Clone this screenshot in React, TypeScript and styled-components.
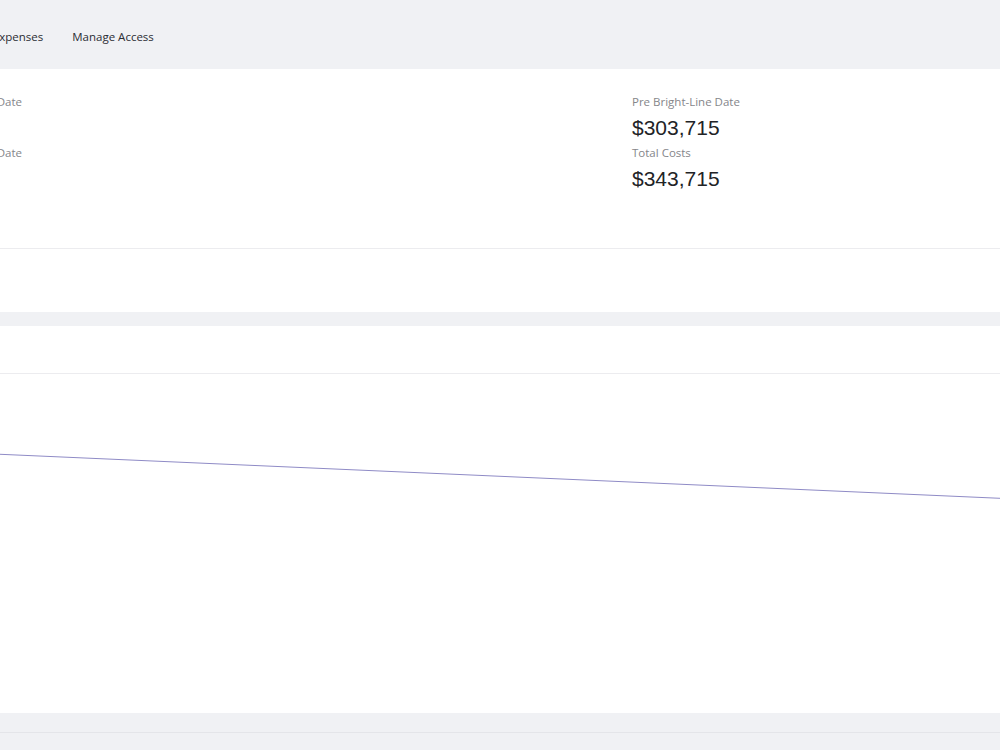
import React from "react";
import styled, { createGlobalStyle } from "styled-components";

const GlobalStyle = createGlobalStyle`
  html, body {
    margin: 0;
    padding: 0;
    background: #f0f1f4;
    font-family: "Open Sans", "Liberation Sans", sans-serif;
  }
`;

// the visible window is a crop of a wider page
const Viewport = styled.div`
  width: 1000px;
  height: 750px;
  overflow: hidden;
  background: #f0f1f4;
`;

const Page = styled.div`
  width: 1120px;
  margin-left: -120px;
  display: flex;
  flex-direction: column;
`;

const NavBar = styled.nav`
  height: 52px;
  display: flex;
  align-items: center;
  gap: 29px;
  padding: 20px 0 0 34px;
  box-sizing: border-box;
`;

const NavItem = styled.span`
  font-size: 11.5px;
  color: #2b2d33;
  white-space: nowrap;
`;

const Card = styled.section<{ $top: number }>`
  margin-top: ${(p) => p.$top}px;
  background: #fff;
  display: flex;
  flex-direction: column;
`;

const StatsGrid = styled.div`
  display: grid;
  grid-template-columns: 142px 610px 1fr;
  padding-top: 24px;
  height: 180px;
  box-sizing: border-box;
  border-bottom: 1px solid #ececef;
`;

const StatColumn = styled.div<{ $right?: boolean }>`
  display: flex;
  flex-direction: column;
  align-items: ${(p) => (p.$right ? "flex-end" : "flex-start")};
`;

const Label = styled.div`
  font-size: 11.5px;
  line-height: 18px;
  color: #85868a;
  height: 51px;
`;

const StatLabel = styled.div`
  font-size: 11.5px;
  line-height: 18px;
  color: #85868a;
`;

const Value = styled.div`
  font-family: "Liberation Sans", Arial, sans-serif;
  font-size: 21px;
  line-height: 33px;
  color: #222326;
`;

const CardFooter = styled.div`
  height: 63px;
`;

const ChartHeader = styled.div`
  height: 47px;
  border-bottom: 1px solid #ececef;
`;

const ChartArea = styled.div`
  height: 339px;
`;

const Footer = styled.div`
  margin-top: 19px;
  border-top: 1px solid #e4e5e9;
  height: 40px;
`;

const App: React.FC = () => {
  return (
    <>
      <GlobalStyle />
      <Viewport>
        <Page>
          <NavBar>
            <NavItem>Overview</NavItem>
            <NavItem>Expenses</NavItem>
            <NavItem>Manage Access</NavItem>
          </NavBar>
          <Card $top={17}>
            <StatsGrid>
              <StatColumn $right>
                <Label>Purchase Date</Label>
                <Label>Sale Date</Label>
              </StatColumn>
              <div />
              <StatColumn>
                <StatLabel>Pre Bright-Line Date</StatLabel>
                <Value>$303,715</Value>
                <StatLabel>Total Costs</StatLabel>
                <Value>$343,715</Value>
              </StatColumn>
            </StatsGrid>
            <CardFooter />
          </Card>
          <Card $top={14}>
            <ChartHeader />
            <ChartArea>
              <svg width="1120" height="339" viewBox="0 0 1120 339">
                <line
                  x1="0"
                  y1="75"
                  x2="1120"
                  y2="124.3"
                  stroke="#8f8bc6"
                  strokeWidth="1"
                />
              </svg>
            </ChartArea>
          </Card>
          <Footer />
        </Page>
      </Viewport>
    </>
  );
};

export default App;
